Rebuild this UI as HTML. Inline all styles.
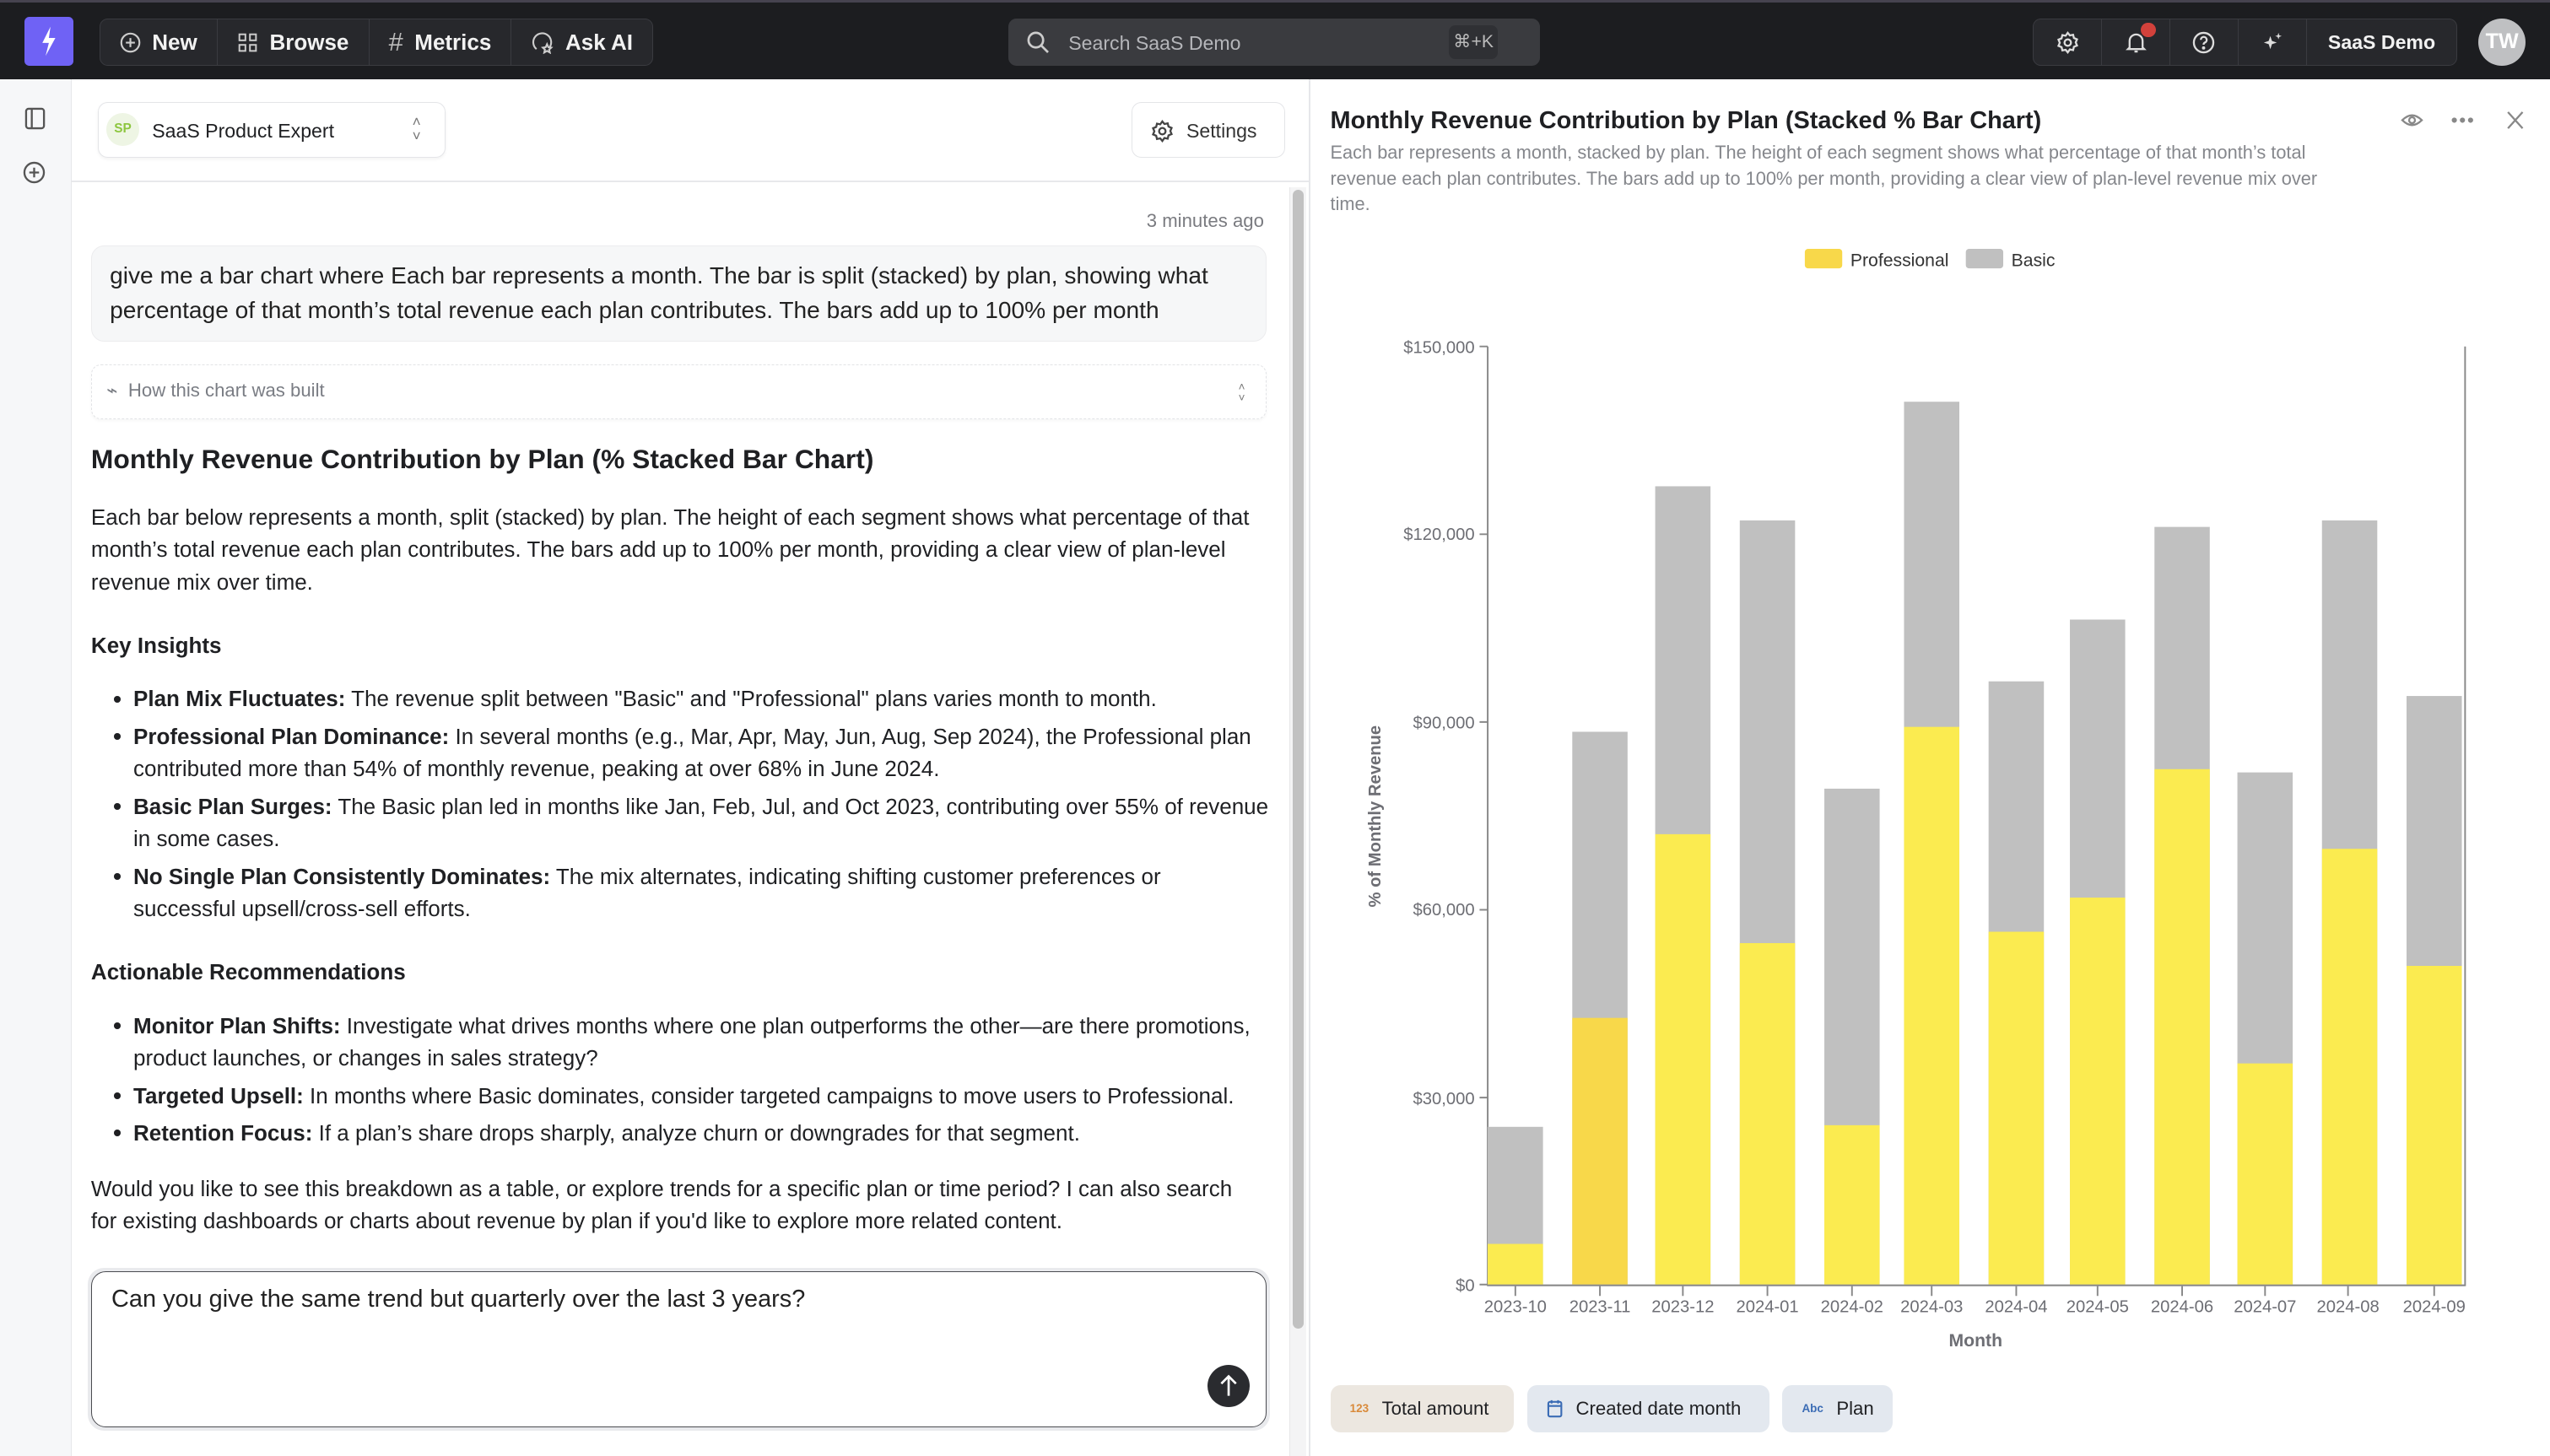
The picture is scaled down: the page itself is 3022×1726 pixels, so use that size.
<!DOCTYPE html>
<html><head><meta charset="utf-8"><style>
*{box-sizing:border-box;margin:0;padding:0}
html,body{width:3022px;height:1726px;overflow:hidden;background:#fff}
#r{zoom:1.92730;width:1568px;height:896px;position:relative;font-family:"Liberation Sans",sans-serif;color:#1f2023;overflow:hidden}
.a{position:absolute}
.nw{white-space:nowrap}
.top{left:0;top:0;width:1568px;height:49px;background:#1c1d20;border-top:2px solid #46434f}
.grp{background:#27282c;border:1px solid #3a3b40;border-radius:5px;display:flex;height:29px;top:10px}
.grp div{display:flex;align-items:center;gap:7px;padding:0 12px;border-right:1px solid #3a3b40;color:#f2f2f2;font-size:13.5px;font-weight:bold}
.grp div:last-child{border-right:none}
p.t{font-size:13.5px;line-height:20px;color:#1f2023}
ul.b{list-style:none;font-size:13.5px;line-height:20px}
ul.b li{position:relative;padding-left:26px;margin-bottom:3px}
ul.b li:before{content:"";position:absolute;left:14px;top:8px;width:4px;height:4px;border-radius:50%;background:#1f2023}
.chip{top:852px;height:29px;border-radius:6px;display:flex;align-items:center;gap:8px;padding:0 12px;font-size:11.5px;color:#1f2023}
.yl{font-size:10.5px;fill:#6d6e74}
</style></head><body><div id="r">
<div class="a top">
 <div class="a" style="left:15px;top:9px;width:30px;height:30px;background:#6f62f5;border-radius:3px"><svg width="30" height="30" viewBox="0 0 30 30"><path d="M16 6 L11 16 L15 16 L13 24 L19 13 L15 13 Z" fill="#fff"/></svg></div>
 <div class="a grp" style="left:61px">
  <div><svg width="13" height="13" viewBox="0 0 14 14"><circle cx="7" cy="7" r="6" fill="none" stroke="#ccc" stroke-width="1.2"/><path d="M7 4v6M4 7h6" stroke="#ccc" stroke-width="1.2"/></svg>New</div>
  <div><svg width="13" height="13" viewBox="0 0 14 14" fill="none" stroke="#ccc" stroke-width="1.1"><rect x="1.5" y="1.5" width="4" height="4"/><rect x="8.5" y="1.5" width="4" height="4"/><rect x="1.5" y="8.5" width="4" height="4"/><rect x="8.5" y="8.5" width="4" height="4"/></svg>Browse</div>
  <div><span style="color:#bbb;font-weight:normal;font-size:16px">#</span>Metrics</div>
  <div><svg width="14" height="14" viewBox="0 0 14 14" fill="none" stroke="#ccc" stroke-width="1.1"><path d="M3 11 A5.5 5.5 0 1 1 11 10"/><path d="M9.5 8l.8 1.8 1.8.3-1.3 1.2.4 1.8-1.7-1-1.7 1 .4-1.8-1.3-1.2 1.8-.3z"/></svg>Ask AI</div>
 </div>
 <div class="a" style="left:620px;top:10px;width:327px;height:29px;background:#3a3b3f;border-radius:5px">
  <svg class="a" style="left:11px;top:7px" width="15" height="15" viewBox="0 0 15 15" fill="none" stroke="#ccc" stroke-width="1.4"><circle cx="6" cy="6" r="4.5"/><path d="M9.5 9.5l4 4"/></svg>
  <div class="a nw" style="left:37px;top:8px;font-size:12px;color:#b5b6ba">Search SaaS Demo</div>
  <div class="a" style="left:271px;top:4px;width:30px;height:21px;background:#2f3034;border-radius:4px;font-size:11px;color:#bbb;text-align:center;line-height:21px">⌘+K</div>
 </div>
 <div class="a grp" style="left:1250px">
  <div style="padding:0;justify-content:center;width:42px"><svg width="14" height="14" viewBox="0 0 14 14" fill="none" stroke="#ddd" stroke-width="1.2"><circle cx="7" cy="7" r="2"/><path d="M7 1l1.3 1.6 2-.4.5 2 1.9.8-.8 1.9.8 1.9-1.9.8-.5 2-2-.4L7 13l-1.3-1.6-2 .4-.5-2-1.9-.8.8-1.9-.8-1.9 1.9-.8.5-2 2 .4z"/></svg></div>
  <div style="padding:0;justify-content:center;width:42px;position:relative"><svg width="14" height="14" viewBox="0 0 14 14" fill="none" stroke="#ddd" stroke-width="1.2"><path d="M3 10V6a4 4 0 0 1 8 0v4l1 1H2z M6 12.5h2"/></svg><span style="position:absolute;left:24px;top:2px;width:9px;height:9px;border-radius:50%;background:#d2413b"></span></div>
  <div style="padding:0;justify-content:center;width:42px"><svg width="14" height="14" viewBox="0 0 14 14" fill="none" stroke="#ddd" stroke-width="1.2"><circle cx="7" cy="7" r="6"/><path d="M5.3 5.3a1.8 1.8 0 1 1 2.4 1.7c-.6.3-.7.6-.7 1.3"/><circle cx="7" cy="10.3" r=".4" fill="#ddd"/></svg></div>
  <div style="padding:0;justify-content:center;width:42px"><svg width="14" height="14" viewBox="0 0 14 14" fill="#ddd"><path d="M6 3l1 3 3 1-3 1-1 3-1-3-3-1 3-1z"/><path d="M11 1l.5 1.5L13 3l-1.5.5L11 5l-.5-1.5L9 3l1.5-.5z"/></svg></div>
  <div style="font-size:12px;padding:0 13px">SaaS Demo</div>
 </div>
 <div class="a" style="left:1524px;top:10px;width:29px;height:29px;border-radius:50%;background:#bfc0c2;color:#fff;font-size:13px;font-weight:bold;text-align:center;line-height:29px">TW</div>
</div>

<div class="a" style="left:0;top:49px;width:44px;height:847px;background:#f6f7f9;border-right:1px solid #e6e7ea"></div>
<svg class="a" style="left:15px;top:66px" width="13" height="14" viewBox="0 0 13 14" fill="none" stroke="#555" stroke-width="1.2"><rect x="1" y="1" width="11" height="12" rx="1.5"/><path d="M4.5 1v12"/></svg>
<svg class="a" style="left:14px;top:99px" width="14" height="14" viewBox="0 0 14 14" fill="none" stroke="#555" stroke-width="1.2"><circle cx="7" cy="7" r="6"/><path d="M7 4v6M4 7h6"/></svg>

<div class="a" style="left:44px;top:111px;width:762px;height:1px;background:#e7e8eb"></div>
<div class="a" style="left:60px;top:63px;width:214px;height:34px;border:1px solid #e4e5e8;border-radius:6px;box-shadow:0 1px 2px rgba(0,0,0,.05)">
 <div class="a" style="left:5px;top:6px;width:20px;height:20px;border-radius:50%;background:#eef5e4;color:#8dc63f;font-size:8px;font-weight:bold;text-align:center;line-height:20px">SP</div>
 <div class="a nw" style="left:33px;top:10px;font-size:12px">SaaS Product Expert</div>
 <div class="a" style="left:193px;top:7px;font-size:9px;color:#777;line-height:9px">˄<br>˅</div>
</div>
<div class="a" style="left:696px;top:63px;width:94px;height:34px;border:1px solid #e4e5e8;border-radius:6px">
 <svg class="a" style="left:11px;top:10px" width="14" height="14" viewBox="0 0 14 14" fill="none" stroke="#444" stroke-width="1.2"><circle cx="7" cy="7" r="2"/><path d="M7 1l1.3 1.6 2-.4.5 2 1.9.8-.8 1.9.8 1.9-1.9.8-.5 2-2-.4L7 13l-1.3-1.6-2 .4-.5-2-1.9-.8.8-1.9-.8-1.9 1.9-.8.5-2 2 .4z"/></svg>
 <div class="a nw" style="left:33px;top:10px;font-size:12px;color:#333">Settings</div>
</div>
<div class="a" style="left:793px;top:115px;width:10px;height:781px;background:#f4f4f5;border-left:1px solid #e6e6e8"><div style="margin:2px auto;width:7px;height:700px;border-radius:4px;background:#c1c1c1"></div></div>

<div class="a nw" style="left:705px;top:129px;font-size:11.5px;color:#7a7b80">3 minutes ago</div>
<div class="a nw" style="left:56px;top:151px;width:723px;height:59px;background:#f6f7f8;border:1px solid #ececee;border-radius:8px;padding:8px 11px;font-size:14.6px;line-height:21px;color:#222">give me a bar chart where Each bar represents a month. The bar is split (stacked) by plan, showing what<br>percentage of that month’s total revenue each plan contributes. The bars add up to 100% per month</div>
<div class="a" style="left:56px;top:224px;width:723px;height:34px;border:1px dashed #e2e3e6;border-radius:6px;box-shadow:0 1px 2px rgba(0,0,0,.04)">
 <div class="a nw" style="left:9px;top:9px;font-size:11.5px;color:#7a7d84">⌁ &nbsp;How this chart was built</div>
 <div class="a" style="left:705px;top:10px;font-size:7px;color:#777;line-height:7px">˄<br>˅</div>
</div>
<div class="a nw" style="left:56px;top:273px;font-size:16.5px;font-weight:bold;color:#1f2023">Monthly Revenue Contribution by Plan (% Stacked Bar Chart)</div>
<p class="a t nw" style="left:56px;top:308px">Each bar below represents a month, split (stacked) by plan. The height of each segment shows what percentage of that<br>month’s total revenue each plan contributes. The bars add up to 100% per month, providing a clear view of plan-level<br>revenue mix over time.</p>
<div class="a nw" style="left:56px;top:389px;font-size:13.5px;font-weight:bold">Key Insights</div>
<ul class="a b nw" style="left:56px;top:420px">
<li><b>Plan Mix Fluctuates:</b> The revenue split between "Basic" and "Professional" plans varies month to month.</li>
<li><b>Professional Plan Dominance:</b> In several months (e.g., Mar, Apr, May, Jun, Aug, Sep 2024), the Professional plan<br>contributed more than 54% of monthly revenue, peaking at over 68% in June 2024.</li>
<li><b>Basic Plan Surges:</b> The Basic plan led in months like Jan, Feb, Jul, and Oct 2023, contributing over 55% of revenue<br>in some cases.</li>
<li><b>No Single Plan Consistently Dominates:</b> The mix alternates, indicating shifting customer preferences or<br>successful upsell/cross-sell efforts.</li>
</ul>
<div class="a nw" style="left:56px;top:590px;font-size:13.5px;font-weight:bold">Actionable Recommendations</div>
<ul class="a b nw" style="left:56px;top:621px">
<li><b>Monitor Plan Shifts:</b> Investigate what drives months where one plan outperforms the other—are there promotions,<br>product launches, or changes in sales strategy?</li>
<li><b>Targeted Upsell:</b> In months where Basic dominates, consider targeted campaigns to move users to Professional.</li>
<li><b>Retention Focus:</b> If a plan’s share drops sharply, analyze churn or downgrades for that segment.</li>
</ul>
<p class="a t nw" style="left:56px;top:721px">Would you like to see this breakdown as a table, or explore trends for a specific plan or time period? I can also search<br>for existing dashboards or charts about revenue by plan if you'd like to explore more related content.</p>
<div class="a" style="left:54px;top:780px;width:727px;height:100px;background:#e9eaed;border-radius:10px"></div>
<div class="a" style="left:56px;top:782px;width:723px;height:96px;background:#fff;border:1px solid #4a4b50;border-radius:9px">
 <div class="a nw" style="left:12px;top:8px;font-size:15px;color:#222">Can you give the same trend but quarterly over the last 3 years?</div>
 <div class="a" style="left:686px;top:57px;width:26px;height:26px;border-radius:50%;background:#2a2b2f"><svg width="26" height="26" viewBox="0 0 26 26" fill="none" stroke="#fff" stroke-width="1.4"><path d="M13 19V7M8.5 11.5L13 7l4.5 4.5"/></svg></div>
</div>

<div class="a" style="left:805px;top:49px;width:1px;height:847px;background:#e6e7ea"></div>
<div class="a nw" style="left:818px;top:66px;font-size:15px;font-weight:bold;color:#1f2023">Monthly Revenue Contribution by Plan (Stacked % Bar Chart)</div>
<div class="a nw" style="left:818px;top:86px;font-size:11.3px;line-height:16px;color:#85878c">Each bar represents a month, stacked by plan. The height of each segment shows what percentage of that month’s total<br>revenue each plan contributes. The bars add up to 100% per month, providing a clear view of plan-level revenue mix over<br>time.</div>
<svg class="a" style="left:1476px;top:67px" width="80" height="14" viewBox="0 0 80 14" fill="none" stroke="#888" stroke-width="1.2"><path d="M1 7q6-6 12 0q-6 6-12 0z"/><circle cx="7" cy="7" r="1.8"/><circle cx="33" cy="7" r="1" fill="#888"/><circle cx="38" cy="7" r="1" fill="#888"/><circle cx="43" cy="7" r="1" fill="#888"/><path d="M66 2l9 10M75 2l-9 10"/></svg>

<svg class="a" style="left:806px;top:140px" width="762" height="700" viewBox="806 140 762 700" font-family="Liberation Sans, sans-serif">
 <rect x="1110" y="153" width="23" height="12" rx="2" fill="#f8d84a"/><text x="1138" y="163.5" font-size="11" fill="#333">Professional</text>
 <rect x="1209" y="153" width="23" height="12" rx="2" fill="#c0c0c0"/><text x="1237" y="163.5" font-size="11" fill="#333">Basic</text>
 <g text-anchor="end">
  <text x="907" y="217" class="yl">$150,000</text><text x="907" y="332" class="yl">$120,000</text><text x="907" y="448" class="yl">$90,000</text><text x="907" y="563" class="yl">$60,000</text><text x="907" y="679" class="yl">$30,000</text><text x="907" y="794" class="yl">$0</text>
 </g>
 <g stroke="#888" stroke-width="1" fill="none"><path d="M910 213h5M910 328.5h5M910 444h5M910 559.5h5M910 675h5M910 790h5"/><path d="M915 213V790.5H1516V213"/></g>
 <text transform="translate(849 502) rotate(-90)" text-anchor="middle" font-size="10.5" font-weight="bold" fill="#6d6e74">% of Monthly Revenue</text>
 <g fill="#c0c0c0">
  <rect x="915" y="693" width="34" height="97"/><rect x="967" y="450" width="34" height="340"/><rect x="1018" y="299" width="34" height="491"/><rect x="1070" y="320" width="34" height="470"/><rect x="1122" y="485" width="34" height="305"/><rect x="1171" y="247" width="34" height="543"/><rect x="1223" y="419" width="34" height="371"/><rect x="1273" y="381" width="34" height="409"/><rect x="1325" y="324" width="34" height="466"/><rect x="1376" y="475" width="34" height="315"/><rect x="1428" y="320" width="34" height="470"/><rect x="1480" y="428" width="34" height="362"/>
 </g>
 <g fill="#fbeb50">
  <rect x="915" y="765" width="34" height="25"/><rect x="967" y="626" width="34" height="164" fill="#f8d84a"/><rect x="1018" y="513" width="34" height="277"/><rect x="1070" y="580" width="34" height="210"/><rect x="1122" y="692" width="34" height="98"/><rect x="1171" y="447" width="34" height="343"/><rect x="1223" y="573" width="34" height="217"/><rect x="1273" y="552" width="34" height="238"/><rect x="1325" y="473" width="34" height="317"/><rect x="1376" y="654" width="34" height="136"/><rect x="1428" y="522" width="34" height="268"/><rect x="1480" y="594" width="34" height="196"/>
 </g>
 <path d="M915 790.5H1516" stroke="#888"/>
 <g stroke="#888"><path d="M932 791v6M984 791v6M1035 791v6M1087 791v6M1139 791v6M1188 791v6M1240 791v6M1290 791v6M1342 791v6M1393 791v6M1444 791v6M1497 791v6"/></g>
 <g font-size="10.5" fill="#6d6e74" text-anchor="middle">
  <text x="932" y="807">2023-10</text><text x="984" y="807">2023-11</text><text x="1035" y="807">2023-12</text><text x="1087" y="807">2024-01</text><text x="1139" y="807">2024-02</text><text x="1188" y="807">2024-03</text><text x="1240" y="807">2024-04</text><text x="1290" y="807">2024-05</text><text x="1342" y="807">2024-06</text><text x="1393" y="807">2024-07</text><text x="1444" y="807">2024-08</text><text x="1497" y="807">2024-09</text>
 </g>
 <text x="1215" y="828" text-anchor="middle" font-size="11" font-weight="bold" fill="#6d6e74">Month</text>
</svg>
<div class="a chip" style="left:818px;width:113px;background:#ece7e0"><span style="font-size:7px;color:#d98a3a;font-weight:bold">123</span>Total amount</div>
<div class="a chip" style="left:939px;width:149px;background:#e3e8ef"><svg width="10" height="12" viewBox="0 0 10 12" fill="none" stroke="#3b6cb5" stroke-width="1.1"><rect x="1" y="2" width="8" height="9" rx="1"/><path d="M1 4.5h8M3 1v2M7 1v2"/></svg>Created date month</div>
<div class="a chip" style="left:1096px;width:68px;background:#e3e8ef"><span style="font-size:7px;color:#3b6cb5;font-weight:bold">Abc</span>Plan</div>
</div></body></html>
